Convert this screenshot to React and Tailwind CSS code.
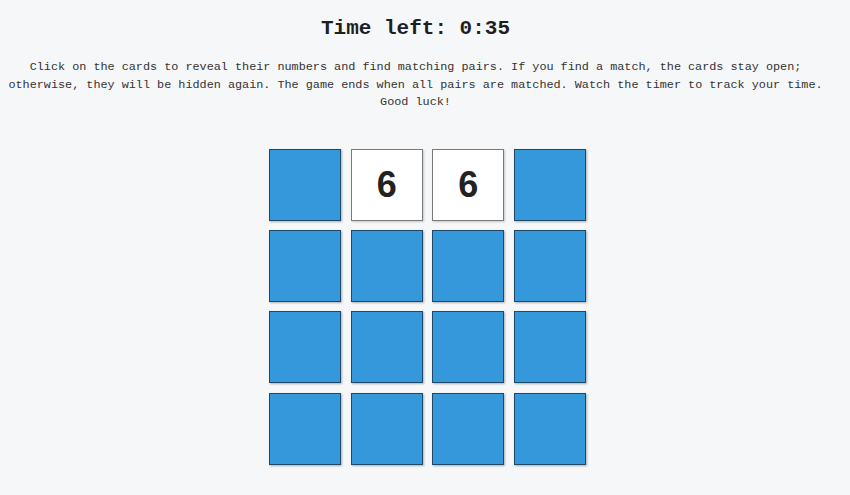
import React from "react";

// Board state: null = hidden card, number = revealed card
const cards = [
  null, 6, 6, null,
  null, null, null, null,
  null, null, null, null,
  null, null, null, null,
];

function Card({ value }) {
  if (value === null) {
    return (
      <div className="w-[72px] h-[72px] bg-[#3498db] border border-[#1d4a6b] shadow-[1px_1px_2px_rgba(0,0,0,0.3)]" />
    );
  }
  return (
    <div className="w-[72px] h-[72px] bg-white border border-[#7a7a7a] shadow-[1px_1px_2px_rgba(0,0,0,0.2)] flex items-center justify-center">
      <span className="text-[36px] font-bold text-[#222] leading-none font-['Liberation_Sans',Arial,sans-serif]">
        {value}
      </span>
    </div>
  );
}

export default function App() {
  return (
    <div className="min-h-[495px] w-full bg-[#f6f7f9] text-[#2a2a2a] font-['Liberation_Mono','DejaVu_Sans_Mono',monospace]">
      <div className="pr-[19px] pt-[15px] text-center">
        <h1 className="text-[21px] font-bold leading-[28px] text-[#1f1f1f]">Time left: 0:35</h1>
        <p className="mt-[16px] text-[11.8px] leading-[17.5px] text-[#333]">
          Click on the cards to reveal their numbers and find matching pairs. If you find a match, the cards stay open; otherwise, they will be hidden again. The game ends when all pairs are matched. Watch the timer to track your time. Good luck!
        </p>
      </div>
      <div className="flex justify-center pl-[5px] mt-[37px]">
        <div className="grid grid-cols-4 gap-[9.4px]">
          {cards.map((v, i) => (
            <Card key={i} value={v} />
          ))}
        </div>
      </div>
    </div>
  );
}
